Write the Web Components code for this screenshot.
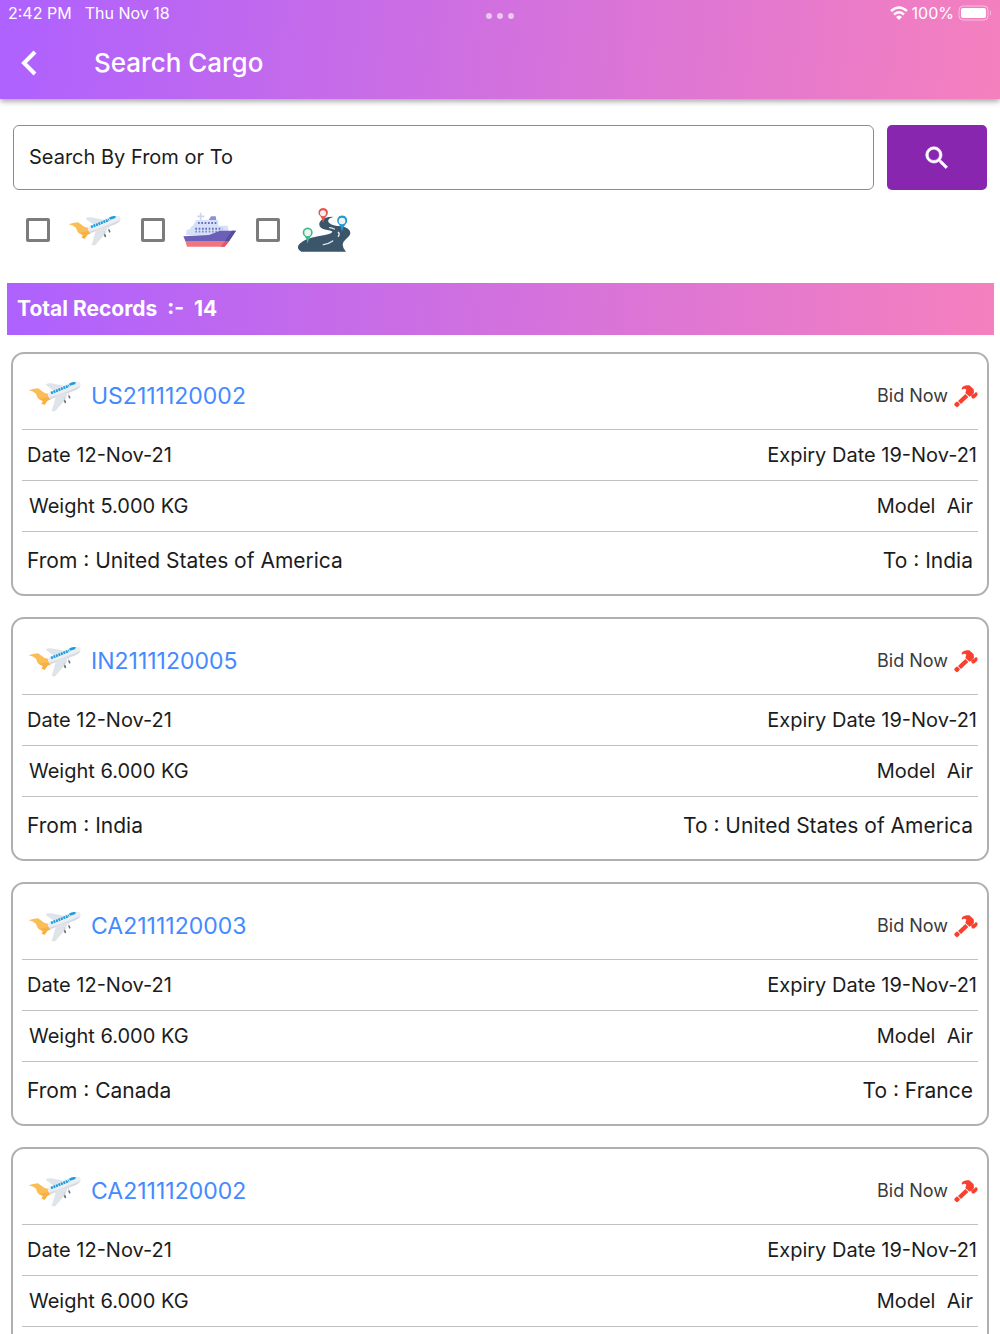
<!DOCTYPE html>
<html lang="en">
<head>
<meta charset="utf-8">
<meta name="viewport" content="width=device-width, initial-scale=1">
<title>Search Cargo</title>
<style>
  body {
    margin: 0;
    background: #fff;
    color: #1c1c1c;
    font-family: Inter, "Liberation Sans", sans-serif;
    font-size: 20px;
  }
</style>
</head>
<body>
<cargo-app>
  <app-header slot="header" heading="Search Cargo" time="2:42 PM" date="Thu Nov 18" battery="100%"></app-header>
  <search-bar placeholder="Search By From or To"></search-bar>
  <mode-filter></mode-filter>
  <record-count total="14"></record-count>
  <cargo-list>
    <cargo-card number="US2111120002" date="12-Nov-21" expiry="19-Nov-21" weight="5.000" model="Air" from="United States of America" to="India"></cargo-card>
    <cargo-card number="IN2111120005" date="12-Nov-21" expiry="19-Nov-21" weight="6.000" model="Air" from="India" to="United States of America"></cargo-card>
    <cargo-card number="CA2111120003" date="12-Nov-21" expiry="19-Nov-21" weight="6.000" model="Air" from="Canada" to="France"></cargo-card>
    <cargo-card number="CA2111120002" date="12-Nov-21" expiry="19-Nov-21" weight="6.000" model="Air"></cargo-card>
  </cargo-list>
</cargo-app>

<script>
const icons = {
  plane: `
    <svg width="54" height="32" viewBox="24 40 162 96" aria-hidden="true">
      <path fill="#dfe3ea" d="M77 54Q82 49 93 50L132 57L103 74Z"/>
      <path fill="#fbbd55" d="M26 71Q38 66 54 65L74 79L88 82L93 97L82 102L74 114L64 111L68 103L56 97Q50 90 48 81Q40 73 26 71Z"/>
      <path fill="#f7b044" d="M56 96L92 90L93 97L82 102L74 114L68 111L70 103Z"/>
      <path fill="#edeef4" d="M84 80Q108 66 130 57Q158 44 173 45Q184 48 182 56Q178 67 151 76Q119 87 91 98Q82 91 84 80Z"/>
      <path fill="#d8dae4" d="M88 92Q130 80 182 57Q178 68 151 76Q119 87 91 98Z"/>
      <path fill="#dfe4e9" d="M108 88L143 77L138 96L107 132Q102 136 95 133Z"/>
      <path fill="#1c9dda" d="M147 51Q157 44 168 47L165 53L150 57Z"/>
      <path stroke="#1c9dda" stroke-width="8" stroke-dasharray="6 2" d="M93 79L147 57"/>
      <path stroke="#68737f" stroke-width="5" stroke-linecap="round" d="M147 88L149 93M134 102L136 107"/>
      <path stroke="#bfc5cf" stroke-width="2" d="M145 78L147 86M132 91L134 101"/>
    </svg>`,
  ship: `
    <svg width="54" height="36" viewBox="24 37 162 108" aria-hidden="true">
      <path stroke="#cbd6f3" stroke-width="5" d="M77 39V64M67 50H88"/>
      <path fill="#8b92dc" d="M101 61L108 50H122L124 61Z"/>
      <path fill="#d6e1f8" d="M54 78L63 61H130V78H158L161 93L150 96L110 108L34 106V91L45 88L51 78Z"/>
      <path stroke="#686cc5" stroke-width="6" stroke-dasharray="5 5" d="M69 70H127M61 87H142"/>
      <path stroke="#8188d1" stroke-width="5" stroke-dasharray="5 5" d="M61 96H142"/>
      <path fill="#6b5fb8" d="M25 110L102 106L135 93H183L161 126H32Z"/>
      <path fill="#584ba0" d="M171 93H183L161 126H148Z"/>
      <path fill="#ef7580" d="M31 124H163L149 141H36Z"/>
      <path fill="#dc5869" d="M151 124H163L149 141H137Z"/>
    </svg>`,
  road: `
    <svg width="54" height="46" viewBox="24 20 162 138" aria-hidden="true">
      <path fill="#3b566b" d="M131 49Q108 56 117 67Q127 77 153 77Q182 83 181 99Q180 107 166 118Q149 132 168 154H34Q17 145 28 131Q42 115 88 107Q126 101 127 94Q126 91 108 88Q83 84 89 66Q96 49 131 49Z"/>
      <path fill="none" stroke="#e5eaed" stroke-width="4" stroke-linecap="round" d="M100 133Q116 131 128 122M145 108Q150 101 145 96M119 82Q126 83 133 86"/>
      <path fill="#e95449" d="M99 67Q95 49 87 43A14 14 0 1 1 112 43Q104 51 99 67Z"/>
      <circle fill="#edf3f3" cx="99" cy="39" r="9"/>
      <path fill="#2398d5" d="M156 94Q151 74 143 67A15 15 0 1 1 170 67Q160 77 156 94Z"/>
      <circle fill="#edf3f7" cx="156" cy="62" r="10"/>
      <path fill="#3fbc89" d="M53 130Q49 111 40 104A15 15 0 1 1 66 104Q57 112 53 130Z"/>
      <circle fill="#edf5f2" cx="53" cy="97" r="10"/>
    </svg>`,
  gavel: `
    <svg width="24" height="24" viewBox="0 0 72 72" fill="#f8402f" aria-hidden="true">
      <rect x="2" y="54" width="14" height="14" rx="4" transform="rotate(-45 9 61)"/>
      <path d="M12 51L34 30L43 39L21 60Z"/>
      <path d="M24 17Q21 13 26 8Q32 2 46 4L59 16L60 27L47 38L34 27L37 17Q31 12 24 17Z"/>
      <path d="M53 41Q49 34 54 31Q60 32 65 25Q71 24 71 31Q71 36 63 41Q57 46 53 41Z"/>
    </svg>`,
  back: `
    <svg width="17" height="26" viewBox="0 0 17 26" fill="none" stroke="#fff" stroke-width="4" aria-hidden="true">
      <path d="M15 2L4 13L15 24"/>
    </svg>`,
  search: `
    <svg width="30" height="30" viewBox="0 0 24 24" fill="#fff" stroke="#fff" stroke-width=".5" aria-hidden="true">
      <path d="M15.500 14h-.79l-.28-.27A6.470 6.470 0 0 0 16 9.500 6.500 6.500 0 1 0 9.500 16c1.610 0 3.090-.59 4.230-1.570l.27.28v.79l5 4.990L20.490 19l-4.990-5zm-6 0C7.010 14 5 11.990 5 9.500S7.010 5 9.500 5 14 7.010 14 9.500 11.990 14 9.500 14z"/>
    </svg>`,
  wifi: `
    <svg width="18" height="14" viewBox="0 0 18 14" fill="none" stroke="#fff" stroke-width="2.400" aria-hidden="true">
      <path d="M1 5Q9 -2 17 5M4 8.500Q9 4 14 8.500"/>
      <path fill="#fff" stroke="none" d="M6 11Q9 8 12 11L9 14Z"/>
    </svg>`,
  battery: `
    <svg width="34" height="16" viewBox="0 0 34 16" aria-hidden="true">
      <rect x="1" y="1" width="29" height="14" rx="4" fill="none" stroke="#fff" stroke-opacity=".5"/>
      <rect x="3" y="3" width="25" height="10" rx="2" fill="#fff"/>
      <path d="M32 5Q34 8 32 11Z" fill="#fff" fill-opacity=".5"/>
    </svg>`
};

class CargoApp extends HTMLElement {
  constructor() {
    super();
    this.attachShadow({ mode: "open" });
    this.shadowRoot.innerHTML = `
    <style>
    :host {
      display: flex;
      flex-direction: column;
      height: 100vh;
    }
    main {
      flex: 1;
      min-height: 0;
      overflow: hidden auto;
      scrollbar-width: none;
    }
    </style>
    <slot name="header"></slot>
    <main><slot></slot></main>
  `;
  }
}

class AppHeader extends HTMLElement {
  constructor() {
    super();
    this.attachShadow({ mode: "open" });
  }

  connectedCallback() {
    this.shadowRoot.innerHTML = `
    <style>
    :host {
      display: block;
      z-index: 1;
      color: #fff;
      background: linear-gradient(96deg, #ae61ff, #f580be);
      box-shadow: 0 2px 6px rgba(0, 0, 0, .4);
    }
    .status {
      display: grid;
      grid-template-columns: 1fr auto 1fr;
      align-items: center;
      height: 26px;
      padding: 0 8px;
      font-size: 16px;
    }
    .clock {
      display: flex;
      gap: 13px;
    }
    .dots {
      display: flex;
      gap: 5px;
      padding-top: 6px;
    }
    .dots i {
      width: 6px;
      height: 6px;
      border-radius: 50%;
      background: rgba(255, 255, 255, .6);
    }
    .power {
      display: flex;
      align-items: center;
      justify-content: flex-end;
      gap: 4px;
    }
    .bar {
      display: flex;
      align-items: center;
      gap: 57px;
      height: 73px;
      padding: 0 20px;
    }
    button {
      display: flex;
      padding: 0;
      border: 0;
      background: none;
    }
    h1 {
      margin: 0;
      font-size: 26px;
      font-weight: 500;
    }
    </style>
    <div class="status">
      <div class="clock"><span>${this.getAttribute("time")}</span><span>${this.getAttribute("date")}</span></div>
      <div class="dots"><i></i><i></i><i></i></div>
      <div class="power">${icons.wifi}<span>${this.getAttribute("battery")}</span>${icons.battery}</div>
    </div>
    <div class="bar">
      <button type="button" aria-label="Back">${icons.back}</button>
      <h1>${this.getAttribute("heading")}</h1>
    </div>
  `;
  }
}

class SearchBar extends HTMLElement {
  constructor() {
    super();
    this.attachShadow({ mode: "open" });
  }

  connectedCallback() {
    const text = this.getAttribute("placeholder");
    this.shadowRoot.innerHTML = `
    <style>
    :host {
      display: block;
      padding: 26px 13px 0;
    }
    form {
      display: flex;
      gap: 13px;
    }
    input {
      flex: 1;
      min-width: 0;
      height: 65px;
      box-sizing: border-box;
      padding: 0 15px 2px;
      border: 1px solid #8c8c8c;
      border-radius: 6px;
      font: inherit;
      color: inherit;
    }
    input::placeholder {
      color: #1c1c1c;
      opacity: 1;
    }
    button {
      display: flex;
      align-items: center;
      justify-content: center;
      width: 100px;
      padding: 0;
      border: 0;
      border-radius: 5px;
      background: #8926af;
    }
    </style>
    <form>
      <input type="text" placeholder="${text}" aria-label="${text}">
      <button type="button" aria-label="Search">${icons.search}</button>
    </form>
  `;
  }
}

class ModeFilter extends HTMLElement {
  constructor() {
    super();
    this.attachShadow({ mode: "open" });
    this.shadowRoot.innerHTML = `
    <style>
    :host {
      display: flex;
      align-items: center;
      gap: 19px;
      height: 80px;
      padding: 0 26px;
    }
    label {
      display: flex;
      align-items: center;
      gap: 18px;
    }
    input {
      appearance: none;
      width: 24px;
      height: 24px;
      margin: 0;
      border: 3px solid #7c7c7c;
      border-radius: 2px;
    }
    input:checked {
      background: #8926af;
    }
    </style>
    <label><input type="checkbox" aria-label="Air">${icons.plane}</label>
    <label><input type="checkbox" aria-label="Sea">${icons.ship}</label>
    <label><input type="checkbox" aria-label="Road">${icons.road}</label>
  `;
  }
}

class RecordCount extends HTMLElement {
  constructor() {
    super();
    this.attachShadow({ mode: "open" });
  }

  connectedCallback() {
    this.shadowRoot.innerHTML = `
    <style>
    :host {
      display: flex;
      align-items: center;
      box-sizing: border-box;
      height: 52px;
      margin: 13px 6px 0 7px;
      padding: 0 10px 2px;
      color: #fff;
      font-size: 21px;
      font-weight: 700;
      white-space: pre;
      background: linear-gradient(93deg, #ae61ff, #f580be);
    }
    </style>
    <span>Total Records  :-  ${this.getAttribute("total")}</span>
  `;
  }
}

class CargoList extends HTMLElement {
  constructor() {
    super();
    this.attachShadow({ mode: "open" });
    this.shadowRoot.innerHTML = `
    <style>
    :host {
      display: flex;
      flex-direction: column;
      gap: 21px;
      padding: 17px 11px;
    }
    </style>
    <slot></slot>
  `;
  }
}

class CargoCard extends HTMLElement {
  constructor() {
    super();
    this.attachShadow({ mode: "open" });
  }

  connectedCallback() {
    const get = (name) => this.getAttribute(name);
    const route = get("from") ? `
      <span>From : ${get("from")}</span>
      <span>To : ${get("to")}</span>` : "";
    this.shadowRoot.innerHTML = `
    <style>
    :host {
      display: block;
      padding: 0 9px;
      border: 2px solid #b0b0b0;
      border-radius: 13px;
    }
    .row {
      display: flex;
      align-items: center;
      justify-content: space-between;
      height: 50px;
      border-bottom: 1px solid #c0c0c0;
    }
    .row span {
      white-space: pre;
    }
    .top {
      height: 67px;
      padding: 8px 0 0 6px;
    }
    .dates {
      padding: 0 1px 0 5px;
    }
    .load {
      padding: 0 5px 0 7px;
    }
    .route {
      height: 56px;
      padding: 0 5px 6px;
      border-bottom: 0;
      font-size: 21px;
    }
    .number {
      display: flex;
      align-items: center;
      gap: 9px;
      color: #448aff;
      font-size: 23px;
      text-decoration: none;
    }
    button {
      display: flex;
      align-items: center;
      gap: 6px;
      padding: 0;
      border: 0;
      background: none;
      color: #3a3a3a;
      font: inherit;
      font-size: 18px;
    }
    </style>
    <div class="row top">
      <a class="number" href="#${get("number")}">${icons.plane}<span>${get("number")}</span></a>
      <button type="button"><span>Bid Now</span>${icons.gavel}</button>
    </div>
    <div class="row dates">
      <span>Date ${get("date")}</span>
      <span>Expiry Date ${get("expiry")}</span>
    </div>
    <div class="row load">
      <span>Weight ${get("weight")} KG</span>
      <span>Model  ${get("model")}</span>
    </div>
    <div class="row route">${route}</div>
  `;
  }
}

customElements.define("cargo-app", CargoApp);
customElements.define("app-header", AppHeader);
customElements.define("search-bar", SearchBar);
customElements.define("mode-filter", ModeFilter);
customElements.define("record-count", RecordCount);
customElements.define("cargo-list", CargoList);
customElements.define("cargo-card", CargoCard);
</script>
</body>
</html>
